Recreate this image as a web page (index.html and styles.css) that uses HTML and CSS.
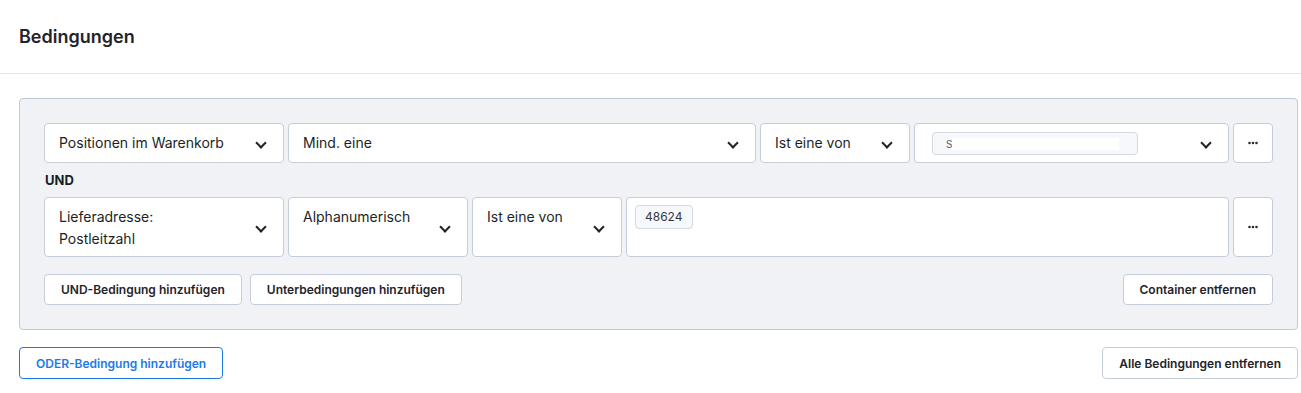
FILE: index.html
```html
<!DOCTYPE html>
<html lang="de">
<head>
    <meta charset="UTF-8">
    <title>Bedingungen</title>
    <link rel="stylesheet" href="styles.css">
</head>
<body>
    <div class="card-header">
        <h2>Bedingungen</h2>
    </div>
    <div class="card-body">
        <div class="or-container">
            <div class="cond-row">
                <div class="field w-240"><span class="field-text">Positionen im Warenkorb</span><span class="chevron"></span></div>
                <div class="field w-468"><span class="field-text">Mind. eine</span><span class="chevron"></span></div>
                <div class="field w-150"><span class="field-text">Ist eine von</span><span class="chevron"></span></div>
                <div class="field w-315">
                    <span class="field-text"><span class="tag tag-wide"><span class="tag-s">S</span><span class="redacted"></span></span></span>
                    <span class="chevron"></span>
                </div>
                <button class="dots-btn" type="button">
                    <svg width="10" height="4" viewBox="0 0 10 4"><circle cx="1.5" cy="2" r="1.3"/><circle cx="5" cy="2" r="1.3"/><circle cx="8.5" cy="2" r="1.3"/></svg>
                </button>
            </div>
            <div class="and-label">UND</div>
            <div class="cond-row">
                <div class="field w-240"><span class="field-text two-lines">Lieferadresse:<br>Postleitzahl</span><span class="chevron"></span></div>
                <div class="field w-180"><span class="field-text">Alphanumerisch</span><span class="chevron"></span></div>
                <div class="field w-150"><span class="field-text">Ist eine von</span><span class="chevron"></span></div>
                <div class="field grow"><span class="field-text"><span class="tag tag-plz">48624</span></span></div>
                <button class="dots-btn" type="button">
                    <svg width="10" height="4" viewBox="0 0 10 4"><circle cx="1.5" cy="2" r="1.3"/><circle cx="5" cy="2" r="1.3"/><circle cx="8.5" cy="2" r="1.3"/></svg>
                </button>
            </div>
            <div class="action-buttons">
                <button class="btn" type="button">UND-Bedingung hinzufügen</button>
                <button class="btn" type="button">Unterbedingungen hinzufügen</button>
                <button class="btn push-right" type="button">Container entfernen</button>
            </div>
        </div>
        <div class="footer-buttons">
            <button class="btn btn-primary" type="button">ODER-Bedingung hinzufügen</button>
            <button class="btn btn-remove" type="button">Alle Bedingungen entfernen</button>
        </div>
    </div>
</body>
</html>
```

FILE: styles.css
```css
body {
    margin: 0;
    font-family: Inter, "Noto Sans", sans-serif;
    color: #1b1f26;
    background-color: #fff;
}
.card-header {
    height: 73px;
    padding: 0 19px;
    display: flex;
    align-items: center;
    border-bottom: 1px solid #e2e5ea;
}
.card-header h2 {
    margin: 0;
    font-size: 18px;
    font-weight: 600;
    color: #1f232a;
}
.card-body {
    padding: 24px 3px 0 19px;
}
.or-container {
    background-color: #f0f2f6;
    border: 1px solid #bfcad8;
    border-radius: 4px;
    padding: 24px;
}
.cond-row {
    display: flex;
    gap: 4px;
}
.field {
    display: flex;
    align-items: center;
    box-sizing: border-box;
    background-color: #fff;
    border: 1px solid #c4cdd9;
    border-radius: 4px;
    padding: 8px 14px 6px;
    font-size: 14px;
    line-height: 22px;
    min-height: 40px;
}
.field-text {
    flex: 1;
    align-self: flex-start;
    height: 22px;
}
.field-text.two-lines {
    height: 44px;
}
.w-240 { width: 240px; }
.w-468 { width: 468px; }
.w-150 { width: 150px; }
.w-180 { width: 180px; }
.w-315 { width: 315px; }
.grow { flex: 1; }
.chevron {
    width: 6px;
    height: 6px;
    border-right: 2px solid #1f232a;
    border-bottom: 2px solid #1f232a;
    transform: rotate(45deg);
    margin: -3px 4px 0 10px;
}
.tag {
    display: inline-flex;
    align-items: center;
    height: 24px;
    box-sizing: border-box;
    padding: 0 9px;
    background-color: #f7f8fb;
    border: 1px solid #d3d9e2;
    border-radius: 4px;
    font-size: 12px;
    line-height: 22px;
    color: #353a42;
    vertical-align: top;
}
.tag-plz {
    margin: -1px 0 0 -6px;
}
.tag-wide {
    width: 206px;
    height: 23px;
    margin: 0 0 0 3px;
    padding: 0 0 0 13px;
}
.tag-s {
    font-size: 10px;
    color: #5a606a;
}
.redacted {
    display: inline-block;
    width: 167px;
    height: 12px;
    background-color: #fff;
}
.dots-btn {
    width: 40px;
    box-sizing: border-box;
    display: flex;
    align-items: center;
    justify-content: center;
    background-color: #fff;
    border: 1px solid #c4cdd9;
    border-radius: 4px;
    fill: #2a2f37;
    padding: 0;
}
.and-label {
    font-size: 13px;
    font-weight: 700;
    line-height: 16px;
    padding: 9px 0 9px 1px;
}
.action-buttons {
    display: flex;
    gap: 8px;
    margin-top: 17px;
}
.btn {
    height: 31px;
    box-sizing: border-box;
    padding: 0 16px;
    background-color: #fff;
    border: 1px solid #c4cdd9;
    border-radius: 4px;
    font-family: inherit;
    font-size: 12px;
    font-weight: 600;
    color: #1f232a;
}
.push-right {
    margin-left: auto;
}
.footer-buttons {
    display: flex;
    justify-content: space-between;
    margin-top: 17px;
}
.btn-primary {
    height: 32px;
    border-color: #1a7ae8;
    color: #1a7ae8;
}
.btn-remove {
    height: 32px;
}
```
